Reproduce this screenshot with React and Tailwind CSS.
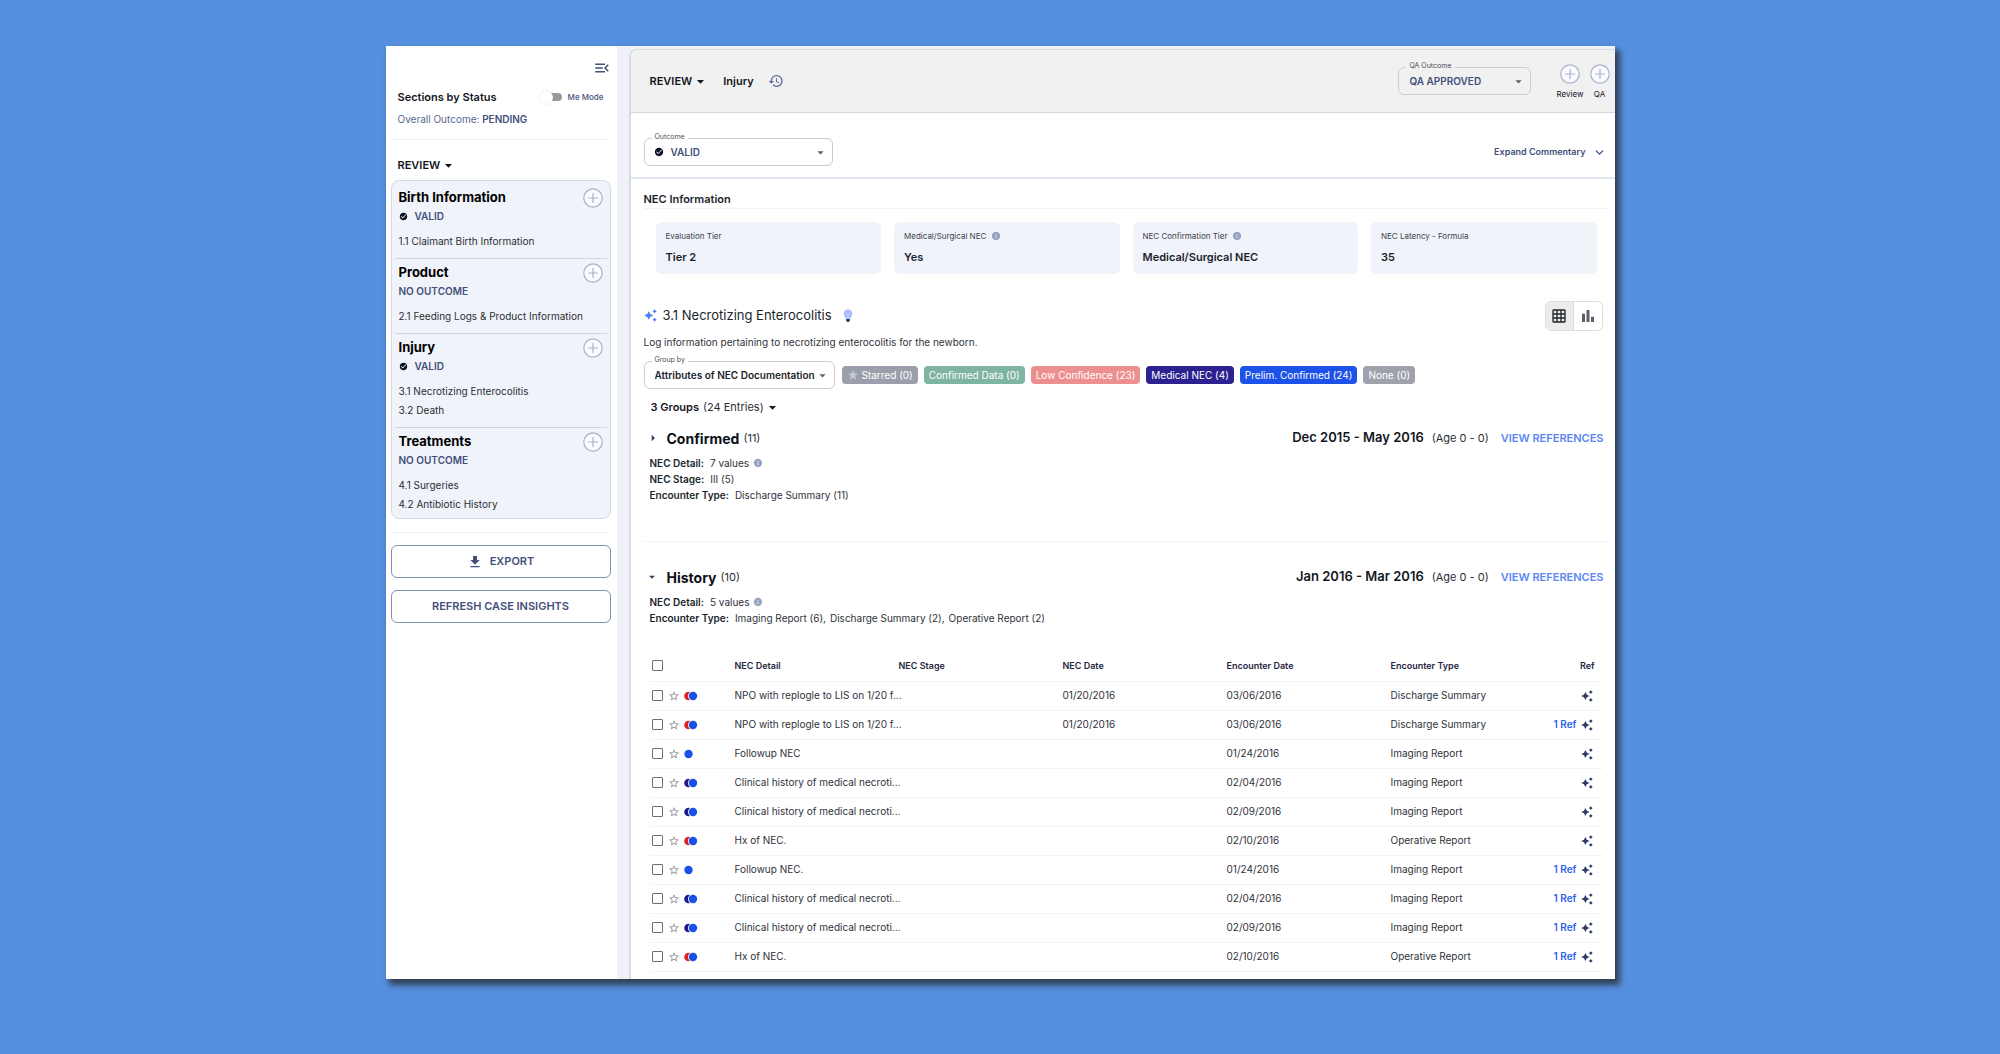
import React, { useState } from 'react'
import { ChevronDown } from 'lucide-react'
import {
  MdArrowDropDown,
  MdArrowRight,
  MdBarChart,
  MdCheckCircle,
  MdFileDownload,
  MdGridOn,
  MdHistory,
  MdInfo,
  MdMenuOpen,
  MdStar,
  MdStarBorder
} from 'react-icons/md'

const SECTIONS = [
  { name: 'Birth Information', valid: true, items: ['1.1 Claimant Birth Information'] },
  { name: 'Product', valid: false, items: ['2.1 Feeding Logs & Product Information'] },
  { name: 'Injury', valid: true, items: ['3.1 Necrotizing Enterocolitis', '3.2 Death'] },
  { name: 'Treatments', valid: false, items: ['4.1 Surgeries', '4.2 Antibiotic History'] }
]

const TIERS = [
  { label: 'Evaluation Tier', value: 'Tier 2' },
  { label: 'Medical/Surgical NEC', value: 'Yes', info: true },
  { label: 'NEC Confirmation Tier', value: 'Medical/Surgical NEC', info: true },
  { label: 'NEC Latency - Formula', value: '35' }
]

const CHIPS = [
  { label: 'Starred (0)', color: 'bg-[#9b9fab]', star: true },
  { label: 'Confirmed Data (0)', color: 'bg-[#7fb3a3]' },
  { label: 'Low Confidence (23)', color: 'bg-[#ec8f8f]' },
  { label: 'Medical NEC (4)', color: 'bg-[#2b2191]' },
  { label: 'Prelim. Confirmed (24)', color: 'bg-[#1d52e8]' },
  { label: 'None (0)', color: 'bg-[#9fa2aa]' }
]

const NPO = 'NPO with replogle to LIS on 1/20 f...'
const CLINICAL = 'Clinical history of medical necroti...'

const ROWS = [
  { detail: NPO, date: '01/20/2016', encounter: '03/06/2016', type: 'Discharge Summary', dot: 'red' },
  { detail: NPO, date: '01/20/2016', encounter: '03/06/2016', type: 'Discharge Summary', dot: 'red', refs: 1 },
  { detail: 'Followup NEC', encounter: '01/24/2016', type: 'Imaging Report' },
  { detail: CLINICAL, encounter: '02/04/2016', type: 'Imaging Report', dot: 'navy' },
  { detail: CLINICAL, encounter: '02/09/2016', type: 'Imaging Report', dot: 'navy' },
  { detail: 'Hx of NEC.', encounter: '02/10/2016', type: 'Operative Report', dot: 'red' },
  { detail: 'Followup NEC.', encounter: '01/24/2016', type: 'Imaging Report', refs: 1 },
  { detail: CLINICAL, encounter: '02/04/2016', type: 'Imaging Report', dot: 'navy', refs: 1 },
  { detail: CLINICAL, encounter: '02/09/2016', type: 'Imaging Report', dot: 'navy', refs: 1 },
  { detail: 'Hx of NEC.', encounter: '02/10/2016', type: 'Operative Report', dot: 'red', refs: 1 }
]

const DOT_FILL = { red: '#d92323', navy: '#1f1a8c' }

const PlusCircle = () => (
  <svg viewBox="0 0 20 20" className="size-5 text-[#a9b1cb]" fill="none" stroke="currentColor" strokeWidth="1.2">
    <circle cx="10" cy="10" r="9.2" fill="#fafbfe" />
    <path d="M10 5v10M5 10h10" />
  </svg>
)

const Sparkle = ({ className }) => (
  <svg viewBox="0 0 12 12" className={className} fill="currentColor">
    <path d="M4.4 2 5.8 4.7 8.6 6 5.8 7.3 4.4 10 3 7.3.2 6 3 4.7Z" />
    <path d="M9.8.2l.8 1.1 1.1.8-1.1.8-.8 1.1-.8-1.1-1.1-.8 1.1-.8Z" />
    <path d="M9.8 8l.8 1.1 1.1.8-1.1.8-.8 1.1-.8-1.1-1.1-.8 1.1-.8Z" />
  </svg>
)

const Bulb = () => (
  <svg viewBox="0 0 10 14" className="h-[14px] w-[10px]">
    <path d="M5 .6a4.3 4.3 0 0 0-2.4 7.9V10h4.8V8.5A4.3 4.3 0 0 0 5 .6Z" fill="#a9bdfb" />
    <path d="M3.6 4.5 5 6l1.4-1.5M5 6v3.5" stroke="#dfe7ff" strokeWidth=".7" fill="none" />
    <path d="M3.2 10h3.6v1.8L5.7 13H4.300l-1.100-1.200Z" fill="#2c3654" />
  </svg>
)

const Dots = ({ kind }) => (
  <svg viewBox="0 0 14 10" className="h-[10px] w-[14px]">
    {kind ? (
      <>
        <circle cx="4.5" cy="5" r="4.3" fill={DOT_FILL[kind]} />
        <circle cx="9" cy="5" r="5" fill="#fff" />
        <circle cx="9" cy="5" r="4.2" fill="#1a50e8" />
      </>
    ) : (
      <circle cx="4.5" cy="5" r="4.2" fill="#1a50e8" />
    )}
  </svg>
)

const SelectField = ({ id, label, options, icon, className, labelClass, textClass }) => (
  <div className={`relative ${className}`}>
    <label htmlFor={id} className={`absolute -top-[5px] left-2 px-[3px] text-[7px] leading-[8px] text-[#4b4f58] ${labelClass}`}>
      {label}
    </label>
    {icon && <MdCheckCircle size={10} className="absolute top-[9px] left-[10px] text-[#0b1020]" />}
    <select
      id={id}
      className={`block h-7 w-full appearance-none rounded-md border border-[#cbccd0] bg-transparent pr-[18px] text-[10px] leading-4 font-semibold outline-none ${icon ? 'pl-[26px]' : 'pl-[10px]'} ${textClass}`}
    >
      {options.map((option) => (
        <option key={option}>{option}</option>
      ))}
    </select>
    <MdArrowDropDown size={15} className="pointer-events-none absolute top-[7px] right-[5px] text-[#5d6068]" />
  </div>
)

const Status = ({ valid }) => (
  <p className="flex h-[14px] items-center gap-[7px] text-[10px] font-semibold text-[#43507a]">
    {valid && <MdCheckCircle size={9} className="text-[#0b1020]" />}
    {valid ? 'VALID' : 'NO OUTCOME'}
  </p>
)

const Sidebar = () => (
  <aside className="w-[231px] shrink-0 bg-white pr-[6px] pl-[5px]">
    <div className="flex h-[43px] items-center justify-end">
      <button aria-label="Collapse menu" className="text-[#43507a]">
        <MdMenuOpen size={18} />
      </button>
    </div>

    <div className="border-b border-[#f2f3f6] pr-[7px] pb-3 pl-[7px]">
      <div className="flex h-4 items-center justify-between">
        <h2 className="text-[11px] font-semibold text-[#14161d]">Sections by Status</h2>
        <label className="flex items-center gap-[6px] text-[8px] font-medium text-[#4a5680]">
          <input type="checkbox" className="peer sr-only" />
          <span className="flex h-[8px] w-[22px] items-center rounded-full bg-gradient-to-r from-white from-50% to-[#9a9a9a] to-50%">
            <span className="size-[13px] shrink-0 rounded-full bg-white shadow-[0_0_3px_rgba(0,0,0,0.12)]" />
          </span>
          Me Mode
        </label>
      </div>
      <p className="mt-[6px] text-[10px] leading-4 text-[#5a678f]">
        Overall Outcome: <span className="font-semibold text-[#43507a]">PENDING</span>
      </p>
    </div>

    <button className="mt-4 ml-[7px] flex h-[18px] items-center text-[11px] font-semibold text-[#14161d]">
      REVIEW
      <MdArrowDropDown size={17} />
    </button>

    <nav className="mt-[6px] rounded-lg border border-[#d3d9e5] bg-[#f0f3f9] px-[3px] pt-[3px]">
      {SECTIONS.map((section) => (
        <section
          key={section.name}
          className="border-b border-[#d3d6dd] px-[4px] pt-[3px] pb-[7px] last:border-0 last:pb-1"
        >
          <div className="flex h-[22px] items-center justify-between">
            <h3 className="text-[13px] font-bold text-black">{section.name}</h3>
            <button aria-label={`Add to ${section.name}`}>
              <PlusCircle />
            </button>
          </div>
          <Status valid={section.valid} />
          <ul className="mt-[9px]">
            {section.items.map((item) => (
              <li key={item}>
                <a href="#" className="block text-[10px] leading-[19px] whitespace-nowrap text-[#2b2e36]">{item}</a>
              </li>
            ))}
          </ul>
        </section>
      ))}
    </nav>

    <div className="mt-[13px] flex flex-col gap-3 border-t border-[#f2f3f6] pt-3">
      <button className="flex h-[33px] items-center justify-center gap-[7px] rounded-md border border-[#8490b3] text-[11px] font-semibold text-[#43507a]">
        <MdFileDownload size={16} />
        EXPORT
      </button>
      <button className="h-[33px] rounded-md border border-[#8490b3] text-[11px] font-semibold text-[#43507a]">
        REFRESH CASE INSIGHTS
      </button>
    </div>
  </aside>
)

const Header = () => (
  <header className="flex h-[63px] items-center justify-between rounded-tl-lg border-b border-[#d4d5d8] bg-[#f1f1f1] pr-[5px] pl-[19px]">
    <div className="flex items-center text-[11px] font-semibold text-[#14161d]">
      <button className="flex items-center">
        REVIEW
        <MdArrowDropDown size={17} />
      </button>
      <span className="ml-[14px]">Injury</span>
      <button aria-label="History" className="ml-[14px] text-[#5a6894]">
        <MdHistory size={16} />
      </button>
    </div>
    <div className="flex items-center">
      <SelectField
        id="qa-outcome"
        label="QA Outcome"
        options={['QA APPROVED', 'QA REJECTED']}
        className="w-[133px]"
        labelClass="bg-[#f1f1f1]"
        textClass="text-[#43507a]"
      />
      <button className="ml-[25px] flex flex-col items-center gap-[5px] text-[8px] leading-[10px] text-[#14161d]">
        <PlusCircle />
        Review
      </button>
      <button className="ml-[6px] flex flex-col items-center gap-[5px] text-[8px] leading-[10px] text-[#14161d]">
        <PlusCircle />
        QA
      </button>
    </div>
  </header>
)

const Detail = ({ label, children }) => (
  <div className="flex h-4 items-center gap-[6px]">
    <dt className="font-semibold text-[#1b1f2b]">{label}:</dt>
    <dd className="flex items-center gap-1">{children}</dd>
  </div>
)

const GroupHeader = ({ name, count, range, open, onToggle }) => (
  <div className="flex h-[22px] items-center justify-between pr-[11px] pl-[19px]">
    <div className="flex items-center">
      <button aria-label={`Toggle ${name}`} onClick={onToggle} className="-ml-[5px] w-[22px] text-[#33405f]">
        {open ? <MdArrowDropDown size={14} /> : <MdArrowRight size={16} />}
      </button>
      <h3 className="text-[14px] font-bold text-[#0d1017]">{name}</h3>
      <span className="ml-1 text-[11px] text-[#2b2e36]">({count})</span>
    </div>
    <div className="flex items-center text-[11px]">
      <span className="text-[13px] font-semibold text-[#14161d]">{range}</span>
      <span className="ml-2 text-[#2b2e36]">(Age 0 - 0)</span>
      <a href="#" className="ml-3 font-semibold text-[#5b86f5]">VIEW REFERENCES</a>
    </div>
  </div>
)

const Info = () => <MdInfo size={10} className="text-[#98a2c3]" />

const HistoryTable = () => (
  <table className="w-full table-fixed text-left text-[10px] text-[#2f323a]">
    <colgroup>
      <col className="w-[85px]" />
      <col />
      <col />
      <col />
      <col />
      <col />
      <col className="w-[48px]" />
    </colgroup>
    <thead>
      <tr className="h-[30px] border-b border-[#f1f3f7] text-[9px] text-[#1f2740]">
        <th className="pl-[2px]">
          <input
            type="checkbox"
            aria-label="Select all"
            className="block size-[11px] appearance-none rounded-[1px] border border-[#6b6e76]"
          />
        </th>
        <th className="font-semibold">NEC Detail</th>
        <th className="font-semibold">NEC Stage</th>
        <th className="font-semibold">NEC Date</th>
        <th className="font-semibold">Encounter Date</th>
        <th className="font-semibold">Encounter Type</th>
        <th className="pr-2 text-right font-semibold">Ref</th>
      </tr>
    </thead>
    <tbody>
      {ROWS.map((row, i) => (
        <tr key={i} className="h-[29px] border-b border-[#f1f3f7] whitespace-nowrap">
          <td className="pl-[2px]">
            <div className="flex items-center">
              <input
                type="checkbox"
                aria-label={`Select row ${i + 1}`}
                className="size-[11px] appearance-none rounded-[1px] border border-[#6b6e76]"
              />
              <button aria-label="Star" className="ml-[5px] text-[#8f929a]">
                <MdStarBorder size={12} />
              </button>
              <span className="ml-1">
                <Dots kind={row.dot} />
              </span>
            </div>
          </td>
          <td>{row.detail}</td>
          <td />
          <td>{row.date}</td>
          <td>{row.encounter}</td>
          <td>{row.type}</td>
          <td className="pr-[10px]">
            <div className="flex items-center justify-end gap-1">
              {row.refs && <a href="#" className="font-semibold text-[#2f5fe8]">{row.refs} Ref</a>}
              <Sparkle className="size-3 shrink-0 text-[#2c3a66]" />
            </div>
          </td>
        </tr>
      ))}
    </tbody>
  </table>
)

const App = () => {
  const [confirmedOpen, setConfirmedOpen] = useState(false)
  const [historyOpen, setHistoryOpen] = useState(true)

  return (
    <div className="min-h-screen bg-[#5590e0] px-4 pt-[46px] pb-[75px] font-['Inter',sans-serif]">
      <div className="mx-auto flex max-w-[1229px] bg-[#eff2f8] shadow-[4px_5px_6px_1px_rgba(40,45,50,0.8)]">
        <Sidebar />

        <main className="mt-[3px] ml-3 min-w-0 flex-1 rounded-tl-lg border-t border-l-2 border-[#d9dbe1] bg-white pb-[7px]">
          <Header />

          <div className="flex h-[66px] items-center justify-between border-b-2 border-[#e0e6ee] pr-[9px] pl-[13px]">
            <SelectField
              id="outcome"
              label="Outcome"
              options={['VALID', 'INVALID']}
              icon
              className="mt-[14px] w-[189px]"
              labelClass="bg-white"
              textClass="text-[#43507a]"
            />
            <button className="mt-[14px] flex items-center gap-[7px] text-[9px] font-semibold text-[#43507a]">
              Expand Commentary
              <ChevronDown size={13} strokeWidth={2.5} />
            </button>
          </div>

          <section className="pr-[6px] pl-[13px]">
            <h2 className="mt-3 border-b border-[#f1f3f7] text-[11px] leading-[17px] font-semibold text-[#1b1f2b]">
              NEC Information
            </h2>
            <div className="mt-[13px] grid grid-cols-4 gap-[13px] pr-3 pl-3">
              {TIERS.map((tier) => (
                <div key={tier.label} className="h-[52px] rounded-md bg-[#f0f3f9] px-[10px] pt-2">
                  <p className="flex items-center gap-[5px] text-[8px] leading-3 text-[#3d414b]">
                    {tier.label}
                    {tier.info && <Info />}
                  </p>
                  <p className="mt-[7px] text-[11px] leading-4 font-semibold text-[#1b1f2b]">{tier.value}</p>
                </div>
              ))}
            </div>
          </section>

          <section className="mt-[26px] pr-3 pl-[13px]">
            <div className="flex h-[31px] items-center">
              <Sparkle className="mr-[6px] size-[13px] text-[#4f7df3]" />
              <h2 className="mr-[11px] text-[13px] text-[#1b1f2b]">3.1 Necrotizing Enterocolitis</h2>
              <Bulb />
              <div className="ml-auto flex h-[30px] overflow-hidden rounded-md border border-[#dcdde0]">
                <button aria-label="Table view" className="flex w-7 items-center justify-center border-r border-[#dcdde0] bg-[#ececed] text-[#1f222b]">
                  <MdGridOn size={16} />
                </button>
                <button aria-label="Chart view" className="flex w-7 items-center justify-center text-[#5d6068]">
                  <MdBarChart size={18} />
                </button>
              </div>
            </div>
            <p className="mt-[3px] text-[10px] leading-4 text-[#2f323a]">
              Log information pertaining to necrotizing enterocolitis for the newborn.
            </p>
            <div className="mt-[11px] flex items-center gap-[6px]">
              <SelectField
                id="group-by"
                label="Group by"
                options={['Attributes of NEC Documentation']}
                className="mr-[1px] w-[191px]"
                labelClass="bg-white"
                textClass="text-[#1b1f2b]"
              />
              {CHIPS.map((chip) => (
                <button
                  key={chip.label}
                  className={`flex h-[18px] items-center gap-[3px] rounded px-[5px] text-[10px] whitespace-nowrap text-white ${chip.color}`}
                >
                  {chip.star && <MdStar size={12} className="text-[#c3c9dc]" />}
                  {chip.label}
                </button>
              ))}
            </div>
          </section>

          <button className="mt-[9px] ml-5 flex h-[18px] items-center text-[11px] text-[#2b2e36]">
            <span className="mr-1 font-semibold text-[#14161d]">3 Groups</span>
            (24 Entries)
            <MdArrowDropDown size={17} className="text-[#14161d]" />
          </button>

          <section className="mt-[11px]">
            <GroupHeader
              name="Confirmed"
              count={11}
              range="Dec 2015 - May 2016"
              open={confirmedOpen}
              onToggle={() => setConfirmedOpen(!confirmedOpen)}
            />
            <dl className="mt-[6px] pl-[19px] text-[10px] text-[#2f323a]">
              <Detail label="NEC Detail">7 values <Info /></Detail>
              <Detail label="NEC Stage">III (5)</Detail>
              <Detail label="Encounter Type">Discharge Summary (11)</Detail>
            </dl>
          </section>

          <hr className="mt-[38px] mr-[6px] ml-[13px] border-[#f1f3f7]" />

          <section className="mt-[24px]">
            <GroupHeader
              name="History"
              count={10}
              range="Jan 2016 - Mar 2016"
              open={historyOpen}
              onToggle={() => setHistoryOpen(!historyOpen)}
            />
            <dl className="mt-[6px] pl-[19px] text-[10px] text-[#2f323a]">
              <Detail label="NEC Detail">5 values <Info /></Detail>
              <Detail label="Encounter Type">
                <span>Imaging Report (6),</span>
                <span>Discharge Summary (2),</span>
                <span>Operative Report (2)</span>
              </Detail>
            </dl>
          </section>

          {historyOpen && (
            <div className="mt-[25px] pr-3 pl-[19px]">
              <HistoryTable />
            </div>
          )}
        </main>
      </div>
    </div>
  )
}

export default App
